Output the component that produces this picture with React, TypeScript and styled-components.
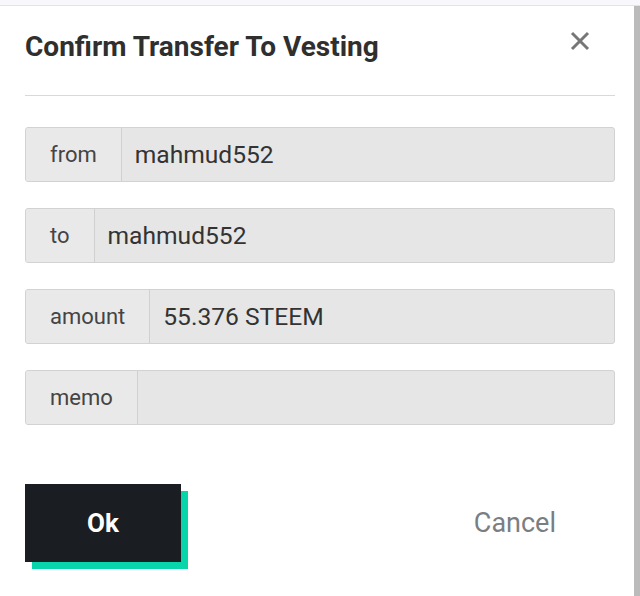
import React from "react";
import styled, { createGlobalStyle } from "styled-components";

const Global = createGlobalStyle`
  html, body { margin: 0; padding: 0; background: #ffffff; }
  body { font-family: Roboto, "Liberation Sans", Arial, sans-serif; }
  * { box-sizing: border-box; }
`;

const Page = styled.div`
  width: 640px;
  height: 596px;
  display: flex;
  flex-direction: column;
  overflow: hidden;
`;

const TopStrip = styled.div`
  height: 6px;
  flex: none;
  background: #f7f7fc;
  border-bottom: 1px solid #e2e2ea;
`;

const Body = styled.div`
  flex: 1;
  display: flex;
`;

const Modal = styled.div`
  flex: 1;
  padding: 0 19px 0 25px;
  display: flex;
  flex-direction: column;
`;

const Scrollbar = styled.div`
  width: 6px;
  flex: none;
  background: #bbbbbb;
`;

const Header = styled.div`
  display: flex;
  align-items: flex-start;
  justify-content: space-between;
  padding: 25px 0 32px;
  border-bottom: 1px solid #d9d9d9;
`;

const Title = styled.h1`
  margin: 0;
  font-size: 28px;
  line-height: 32px;
  font-weight: 700;
  color: #2f2f2f;
`;

const Close = styled.button`
  border: 0;
  background: none;
  padding: 0;
  margin: 0 25px 0 0;
  width: 20px;
  height: 20px;
  cursor: pointer;
  display: flex;
`;

const Fields = styled.div`
  display: flex;
  flex-direction: column;
  gap: 26px;
  margin-top: 31px;
`;

const Group = styled.div`
  display: flex;
  height: 55px;
  border: 1px solid #d2d2d2;
  border-radius: 3px;
  overflow: hidden;
  background: #e6e6e6;
`;

const Label = styled.span`
  flex: none;
  display: flex;
  align-items: center;
  padding: 0 24px;
  background: #e9e9e9;
  border-right: 1px solid #d0d0d0;
  font-size: 22px;
  color: #444444;
`;

const Value = styled.span`
  flex: 1;
  display: flex;
  align-items: center;
  padding: 0 13px;
  font-size: 24.6px;
  color: #333333;
`;

const Footer = styled.div`
  display: flex;
  align-items: center;
  justify-content: space-between;
  margin-top: 59px;
`;

const OkButton = styled.button`
  width: 156px;
  height: 78px;
  border: 0;
  background: #1a1e23;
  color: #ffffff;
  font-family: Roboto, "Liberation Sans", Arial, sans-serif;
  font-size: 26px;
  font-weight: 700;
  box-shadow: 7px 7px 0 #06d6a9;
  cursor: pointer;
`;

const CancelButton = styled.button`
  border: 0;
  background: none;
  padding: 0;
  margin: 0 59px 0 0;
  font-family: Roboto, "Liberation Sans", Arial, sans-serif;
  font-size: 27px;
  color: #7a7e83;
  cursor: pointer;
`;

const rows = [
  { label: "from", value: "mahmud552" },
  { label: "to", value: "mahmud552" },
  { label: "amount", value: "55.376 STEEM" },
  { label: "memo", value: "" },
];

export default function App() {
  return (
    <Page>
      <Global />
      <TopStrip />
      <Body>
        <Modal>
          <Header>
            <Title>Confirm Transfer To Vesting</Title>
            <Close aria-label="close">
              <svg width="20" height="20" viewBox="0 0 20 20">
                <path d="M2 2 L18 18 M18 2 L2 18" stroke="#777777" strokeWidth="3" />
              </svg>
            </Close>
          </Header>
          <Fields>
            {rows.map((r) => (
              <Group key={r.label}>
                <Label>{r.label}</Label>
                <Value>{r.value}</Value>
              </Group>
            ))}
          </Fields>
          <Footer>
            <OkButton>Ok</OkButton>
            <CancelButton>Cancel</CancelButton>
          </Footer>
        </Modal>
        <Scrollbar />
      </Body>
    </Page>
  );
}
